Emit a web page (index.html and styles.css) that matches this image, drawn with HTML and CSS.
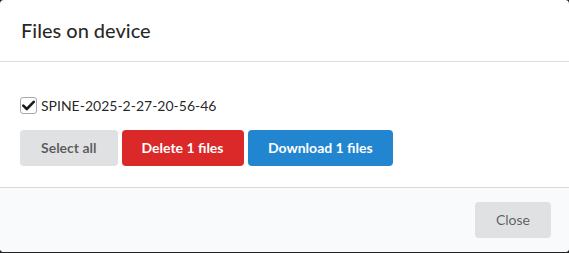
FILE: index.html
```html
<!DOCTYPE html>
<html lang="en">
<head>
    <meta charset="UTF-8">
    <meta name="viewport" content="width=device-width, initial-scale=1.0">
    <title>Files on device</title>
    <link rel="stylesheet" href="styles.css">
</head>
<body>
    <div class="modal">
        <div class="modal-header">Files on device</div>

        <div class="modal-content">
            <div class="file-list">
                <label class="file-item">
                    <span class="check-box">
                        <svg width="13" height="11" viewBox="0 0 13 11"><path d="M1.3 5.6 L4.8 9 L11.7 1.8" fill="none" stroke="#1b1c1d" stroke-width="2.6" stroke-linecap="round" stroke-linejoin="round"/></svg>
                    </span>
                    <span class="file-name">SPINE-2025-2-27-20-56-46</span>
                </label>
            </div>
            <div class="file-actions">
                <button class="btn grey">Select all</button>
                <button class="btn red">Delete 1 files</button>
                <button class="btn blue">Download 1 files</button>
            </div>
        </div>

        <div class="modal-actions">
            <button class="btn grey light">Close</button>
        </div>
    </div>
</body>
</html>
```

FILE: styles.css
```css
body {
    margin: 0;
    background: #222;
    font-family: Lato, "Helvetica Neue", Arial, sans-serif;
    font-size: 14px;
    color: rgba(0, 0, 0, 0.87);
}

.modal {
    background: #fff;
    border-radius: 4px;
    overflow: hidden;
}

/* Заголовок */
.modal-header {
    padding: 17.5px 21px;
    font-size: 20px;
    line-height: 25.7px;
    font-weight: 500;
    color: rgba(0, 0, 0, 0.85);
    border-bottom: 1px solid rgba(34, 36, 38, 0.15);
}

.modal-content {
    padding: 21px 20px 21px 20px;
}

.file-list {
    margin-top: 14px;
}

.file-item {
    display: flex;
    align-items: center;
    gap: 4px;
    height: 17px;
}

.check-box {
    width: 15px;
    height: 15px;
    border: 1px solid #a8a8a8;
    border-radius: 3px;
    display: flex;
    align-items: center;
    justify-content: center;
    background: #fff;
}

.file-name {
    font-size: 14px;
    line-height: 17px;
}

.file-actions {
    margin-top: 16px;
    display: flex;
    gap: 4px;
}

/* Кнопки */
.btn {
    font-family: inherit;
    font-size: 14px;
    font-weight: 700;
    line-height: 14px;
    padding: 11px 21px;
    border: none;
    border-radius: 4px;
    cursor: pointer;
}

.btn.grey {
    background: #e0e1e2;
    color: rgba(0, 0, 0, 0.6);
}

.btn.light {
    font-weight: 400;
}

.btn.red {
    background: #db2828;
    color: #fff;
    padding: 11px 20px;
}

.btn.blue {
    background: #2185d0;
    color: #fff;
    padding: 11px 20.5px;
}

.modal-actions {
    background: #f9fafb;
    border-top: 1px solid rgba(34, 36, 38, 0.15);
    padding: 14px 18px 14px 14px;
    display: flex;
    justify-content: flex-end;
}
```
